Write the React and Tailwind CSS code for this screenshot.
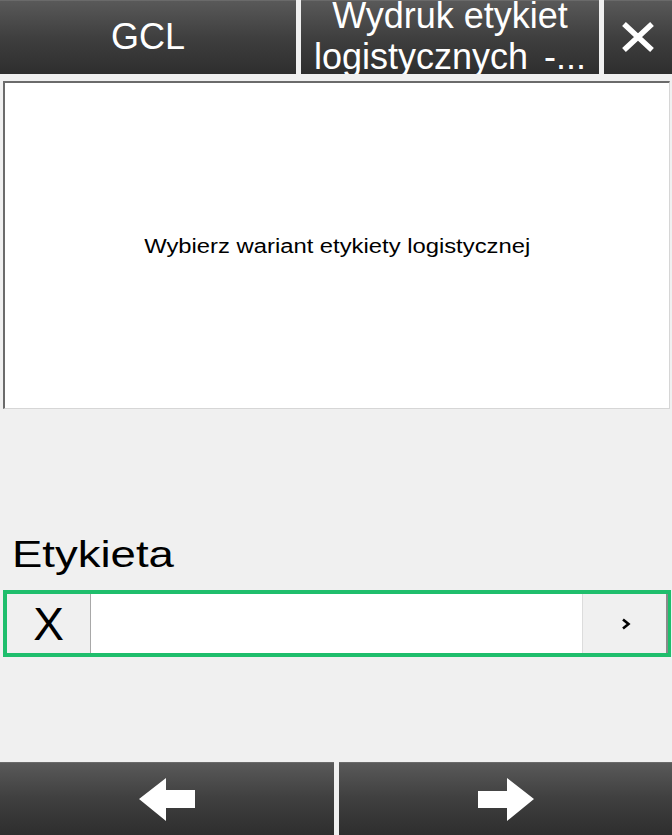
export default function App() {
  const font = { fontFamily: '"Liberation Sans", Arial, sans-serif' };
  const dark =
    "bg-gradient-to-b from-[#595959] via-[#3f3f3f] to-[#2e2e2e] border-t border-[#6a6a6a]";
  return (
    <div
      className="w-[672px] h-[835px] bg-[#f0f0f0] flex flex-col overflow-hidden"
      style={font}
    >
      {/* Header */}
      <div className="h-[74px] flex gap-[5px] shrink-0">
        <div className={`w-[296px] ${dark} flex items-center justify-center`}>
          <span className="text-white text-[36px] leading-none pb-[2px]">GCL</span>
        </div>
        <div
          className={`w-[298px] ${dark} flex items-center justify-center overflow-hidden`}
        >
          <div className="text-white text-[36px] leading-[41px] text-center whitespace-pre mt-[-4px]">
            <div>Wydruk etykiet</div>
            <div>
              logistycznych <span className="ml-[6px]">-...</span>
            </div>
          </div>
        </div>
        <div className={`flex-1 ${dark} flex items-center justify-center`}>
          <svg width="34" height="30" viewBox="0 0 34 30" className="mt-[-2px]">
            <path
              d="M3 2 L31 28 M31 2 L3 28"
              stroke="white"
              strokeWidth="5.5"
              strokeLinecap="butt"
              fill="none"
            />
          </svg>
        </div>
      </div>

      {/* Message box */}
      <div className="mt-[7px] ml-[3px] mr-[2px] h-[328px] bg-white border-t-2 border-l-2 border-[#6b6b6b] border-r border-b border-r-[#d6d6d6] border-b-[#d6d6d6] flex items-center justify-center shrink-0">
        <span className="text-black text-[20px] leading-none inline-block scale-x-[1.19]">
          Wybierz wariant etykiety logistycznej
        </span>
      </div>

      {/* Label */}
      <div className="mt-[125px] ml-[12px] h-[42px] leading-[42px] text-[37px] text-black shrink-0">
        <span className="inline-block origin-left scale-x-[1.23]">Etykieta</span>
      </div>

      {/* Input row */}
      <div className="mt-[14px] ml-[3px] mr-[1px] h-[67px] border-[4px] border-r-[3px] border-[#1fbe6c] flex shrink-0">
        <div className="w-[84px] bg-[#f0f0f0] border-r border-[#a8a8a8] flex items-center justify-center">
          <span className="text-black text-[46px] leading-none">X</span>
        </div>
        <div className="flex-1 bg-white" />
        <div className="w-[86px] bg-[#f0f0f0] border-l border-[#dcdcdc] border-r-2 border-r-[#8a8a8a] flex items-center justify-center">
          <svg width="10" height="12" viewBox="0 0 10 12" className="ml-[2px]">
            <path d="M2 1.5 L7.5 6 L2 10.5" stroke="black" strokeWidth="2.6" fill="none" />
          </svg>
        </div>
      </div>

      <div className="flex-1" />

      {/* Bottom bar */}
      <div className="h-[73px] flex gap-[5px] shrink-0">
        <div className={`w-[334px] ${dark} flex items-center justify-center`}>
          <svg width="56" height="43" viewBox="0 0 56 43">
            <polygon points="0,21 27,0 27,12 56,12 56,30 27,30 27,43" fill="white" />
          </svg>
        </div>
        <div className={`flex-1 ${dark} flex items-center justify-center`}>
          <svg width="56" height="43" viewBox="0 0 56 43">
            <polygon points="56,21 29,0 29,13 0,13 0,30 29,30 29,43" fill="white" />
          </svg>
        </div>
      </div>
    </div>
  );
}
